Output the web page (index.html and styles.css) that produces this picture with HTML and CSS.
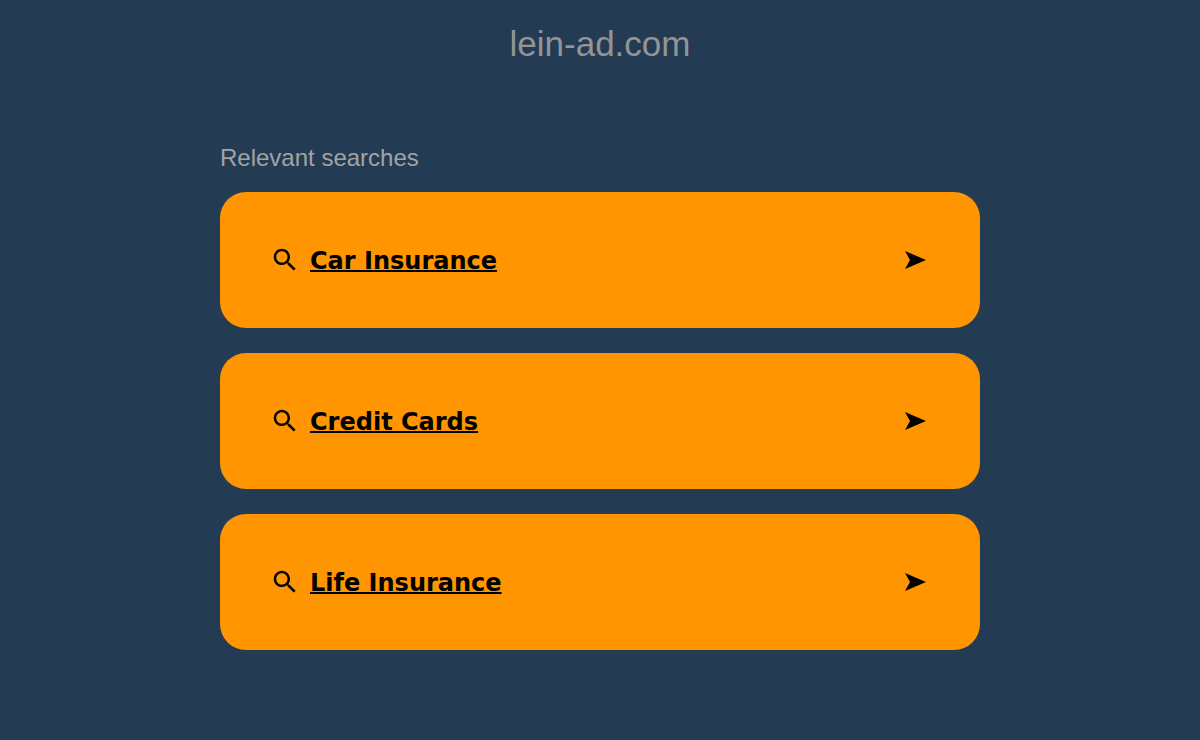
FILE: index.html
```html
<!DOCTYPE html>
<html lang="en">
<head>
<meta charset="UTF-8">
<meta name="viewport" content="width=device-width, initial-scale=1">
<title>lein-ad.com</title>
<link rel="stylesheet" href="styles.css">
</head>
<body>
  <header>
    <h1>lein-ad.com</h1>
  </header>
  <main class="container">
    <h2>Relevant searches</h2>
    <ul class="searches">
      <li>
        <a href="#car-insurance">
          <svg class="icon" viewBox="0 0 24 24" aria-hidden="true"><path d="M15.5 14h-.79l-.28-.27C15.41 12.59 16 11.11 16 9.5 16 5.91 13.09 3 9.5 3S3 5.91 3 9.5 5.91 16 9.5 16c1.61 0 3.09-.59 4.23-1.57l.27.28v.79l5 4.99L20.49 19l-4.99-5zm-6 0C7.01 14 5 11.99 5 9.5S7.01 5 9.5 5 14 7.01 14 9.5 11.99 14 9.5 14z"/></svg>
          <span class="label">Car Insurance</span>
          <svg class="arrow" viewBox="0 0 21 18" aria-hidden="true"><path d="M0 0l21 9-21 9 5-9z"/></svg>
        </a>
      </li>
      <li>
        <a href="#credit-cards">
          <svg class="icon" viewBox="0 0 24 24" aria-hidden="true"><path d="M15.5 14h-.79l-.28-.27C15.41 12.59 16 11.11 16 9.5 16 5.91 13.09 3 9.5 3S3 5.91 3 9.5 5.91 16 9.5 16c1.61 0 3.09-.59 4.23-1.57l.27.28v.79l5 4.99L20.49 19l-4.99-5zm-6 0C7.01 14 5 11.99 5 9.5S7.01 5 9.5 5 14 7.01 14 9.5 11.99 14 9.5 14z"/></svg>
          <span class="label">Credit Cards</span>
          <svg class="arrow" viewBox="0 0 21 18" aria-hidden="true"><path d="M0 0l21 9-21 9 5-9z"/></svg>
        </a>
      </li>
      <li>
        <a href="#life-insurance">
          <svg class="icon" viewBox="0 0 24 24" aria-hidden="true"><path d="M15.5 14h-.79l-.28-.27C15.41 12.59 16 11.11 16 9.5 16 5.91 13.09 3 9.5 3S3 5.91 3 9.5 5.91 16 9.5 16c1.61 0 3.09-.59 4.23-1.57l.27.28v.79l5 4.99L20.49 19l-4.99-5zm-6 0C7.01 14 5 11.99 5 9.5S7.01 5 9.5 5 14 7.01 14 9.5 11.99 14 9.5 14z"/></svg>
          <span class="label">Life Insurance</span>
          <svg class="arrow" viewBox="0 0 21 18" aria-hidden="true"><path d="M0 0l21 9-21 9 5-9z"/></svg>
        </a>
      </li>
    </ul>
  </main>
</body>
</html>
```
FILE: styles.css
```css
* {
  box-sizing: border-box;
}

body {
  margin: 0;
  background-color: #243b54;
  font-family: "Liberation Sans", Arial, sans-serif;
}

header {
  padding: 24px 20px;
  text-align: center;
}

h1 {
  margin: 0;
  color: #949494;
  font-size: 35px;
  font-weight: normal;
  line-height: 40px;
}

.container {
  max-width: 800px;
  margin: 0 auto;
  padding: 56px 20px 40px;
}

h2 {
  margin: 0 0 20px;
  color: #a3a3a3;
  font-size: 24px;
  font-weight: normal;
  line-height: 28px;
}

.searches {
  display: flex;
  flex-direction: column;
  gap: 25px;
  list-style-type: none;
  margin: 0;
  padding: 0;
}

.searches a {
  display: flex;
  align-items: center;
  min-height: 136px;
  padding: 20px 54px 20px 50px;
  border-radius: 26px;
  background-color: #ff9500;
  color: #000;
  font-family: "DejaVu Sans", Verdana, sans-serif;
  font-size: 24px;
  font-weight: bold;
  text-decoration: none;
}

.label {
  flex: 1;
  padding-top: 2px;
  line-height: 28px;
  text-decoration: underline;
  text-decoration-thickness: 2px;
}

.icon {
  width: 30px;
  height: 30px;
  margin-right: 10px;
}

.arrow {
  width: 21px;
  height: 18px;
}
```
